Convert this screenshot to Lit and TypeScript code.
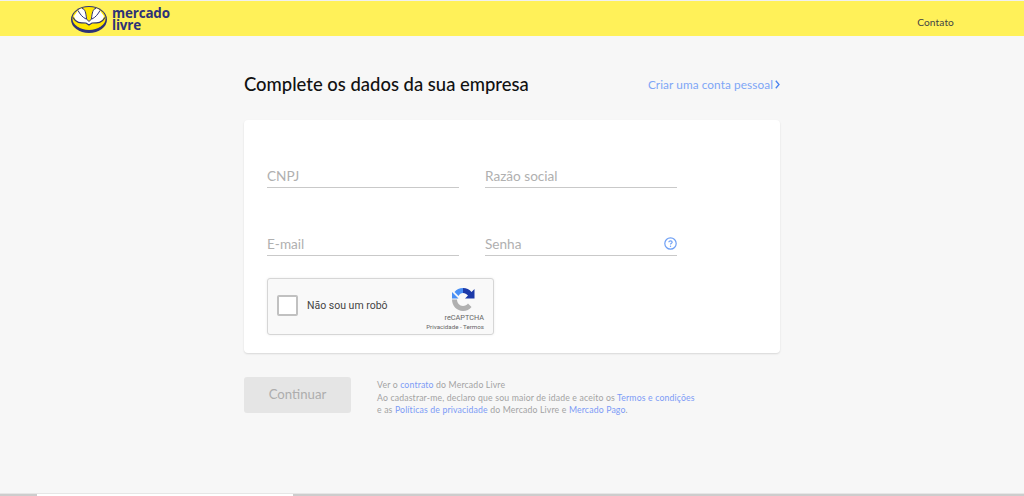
import { LitElement, html, css } from "lit";
import { customElement } from "lit/decorators.js";

@customElement("app-root")
export class AppRoot extends LitElement {
  static styles = css`
    :host { display: block; width: 1024px; height: 496px; overflow: hidden; background: #f7f7f7; font-family: Lato, "Open Sans", sans-serif; color: #333; position: relative; }
    * { box-sizing: border-box; }
    .page { height: 496px; display: flex; flex-direction: column; }
    .topline { height: 1px; background: #f0f0f0; flex: none; }
    header { height: 35px; background: #fff159; flex: none; display: flex; align-items: center; justify-content: space-between; padding: 0 70px 0 71px; }
    .logo { display: flex; align-items: center; gap: 5px; height: 35px; }
    .logo svg { display: block; margin-top: 1px; }
    .wordmark { color: #2d3277; font-family: "Open Sans", sans-serif; font-weight: 700; font-size: 13.4px; line-height: 12px; letter-spacing: -0.15px; }
    .contact { font-size: 10.2px; color: #444; padding-top: 6px; letter-spacing: 0.1px; }
    main { flex: 1; width: 536px; margin-left: 244px; display: flex; flex-direction: column; }
    .title-row { display: flex; justify-content: space-between; align-items: center; height: 28px; margin-top: 34px; }
    h1 { margin: 0; font-size: 18.45px; font-weight: 500; color: #111; font-family: Lato, sans-serif; }
    .personal { font-size: 11.8px; color: #7ea6f6; display: flex; align-items: center; gap: 2px; letter-spacing: 0.08px; }
    .card { margin-top: 22px; height: 233px; background: #fff; border-radius: 4px; box-shadow: 0 1px 2px rgba(0,0,0,.13); padding: 0 23px; }
    .fields { display: grid; grid-template-columns: 192px 192px; column-gap: 26px; row-gap: 36px; padding-top: 36px; }
    .field { height: 32px; border-bottom: 1px solid #c9c9c9; display: flex; align-items: center; justify-content: space-between; padding-top: 8px; font-size: 13.6px; color: #b0b0b0; }
    .captcha { margin-top: 22px; width: 227px; height: 57px; background: #f9f9f9; border: 1px solid #d6d6d6; border-radius: 3px; box-shadow: 0 0 3px rgba(0,0,0,.07); display: flex; align-items: center; padding: 0 9px 2px; font-family: Roboto, sans-serif; position: relative; }
    .check { width: 21px; height: 21px; background: #fff; border: 2px solid #c1c1c1; border-radius: 2px; flex: none; }
    .robot { margin-left: 9px; font-size: 10.5px; color: #444; flex: 1; }
    .badge { width: 70px; margin-right: -9px; padding-top: 7px; display: flex; flex-direction: column; align-items: flex-end; padding-right: 9px; color: #666; }
    .badge svg { display: block; margin: 0 9px 1px 0; }
    .rc { font-size: 7.3px; line-height: 9px; color: #666; }
    .terms { font-size: 6.2px; line-height: 9px; color: #666; margin-top: 1px; white-space: nowrap; }
    .bottom { display: flex; margin-top: 24px; }
    .btn { width: 107px; height: 36px; background: #e5e5e5; border-radius: 3px; color: #adadad; font-size: 13.2px; display: flex; align-items: center; justify-content: center; flex: none; padding-bottom: 2px; }
    .legal { margin-left: 26px; margin-top: 2px; font-size: 8.7px; line-height: 12.5px; color: #a3a3a3; letter-spacing: 0.16px; white-space: nowrap; }
    .legal a { color: #7c9bf6; text-decoration: none; }
    .scrollbar { position: absolute; left: 0; right: 0; bottom: 0; height: 3px; background: #cdcdcd; border-top: 1px solid #e6e6e6; }
    .thumb { position: absolute; left: 37px; top: 0; width: 256px; height: 2px; background: #fff; }
  `;

  render() {
    return html`
      <div class="page">
        <div class="topline"></div>
        <header>
          <div class="logo">
            <svg width="36" height="27" viewBox="0 0 36 27">
              <ellipse cx="18" cy="13.500" rx="18" ry="13.500" fill="#2d3277"/>
              <ellipse cx="18" cy="12.500" rx="16.600" ry="11.400" fill="#ffe600"/>
              <path d="M3 10 C6 6 8 2.500 11 2.500 C14 2.500 15 7 15.500 13 L18 15.500 L20.500 13 C21 7 22 2.500 25 2.500 C28 2.500 30 6 33 10 C32 14 30 16 27 16.500 L21 17 L18 19 L15 17 L9 16.500 C6 16 4 14 3 10 Z" fill="#fff"/>
              <path d="M11 2.500 C14 2.500 15 7 15.500 13 L18 15.500 L20.500 13 C21 7 22 2.500 25 2.500 M7 4.500 C9 8 11 11 15 13 M29 4.500 C27 8 25 11 21 13" fill="none" stroke="#2d3277" stroke-width="1"/>
              <path d="M2 11.500 C5 17 9 17 15 17 L18 19 L21 17 C27 17 31 17 34 11.500" fill="none" stroke="#2d3277" stroke-width="1.200"/>
            </svg>
            <div class="wordmark">mercado<br/>livre</div>
          </div>
          <div class="contact">Contato</div>
        </header>
        <main>
          <div class="title-row">
            <h1>Complete os dados da sua empresa</h1>
            <div class="personal">Criar uma conta pessoal
              <svg width="5" height="9" viewBox="0 0 5 9"><path d="M0.800 0.800 L4 4.500 L0.800 8.200" fill="none" stroke="#4a83f0" stroke-width="1.300"/></svg>
            </div>
          </div>
          <section class="card">
            <div class="fields">
              <div class="field">CNPJ</div>
              <div class="field">Razão social</div>
              <div class="field">E-mail</div>
              <div class="field">Senha
                <svg width="13" height="13" viewBox="0 0 13 13">
                  <circle cx="6.500" cy="6.500" r="5.700" fill="none" stroke="#6fa0f5" stroke-width="1.200"/>
                  <path d="M4.800 5.200 C4.800 3.400 8.200 3.400 8.200 5.200 C8.200 6.300 6.500 6.200 6.500 7.600" fill="none" stroke="#6fa0f5" stroke-width="1.100"/>
                  <circle cx="6.500" cy="9.300" r="0.700" fill="#6fa0f5"/>
                </svg>
              </div>
            </div>
            <div class="captcha">
              <div class="check"></div>
              <div class="robot">Não sou um robô</div>
              <div class="badge">
                <svg width="24" height="25" viewBox="0 0 24 25">
                  <path d="M12 1 C8.500 1 5.500 2.500 3.500 5 L7.500 9 C8.500 7 10 6 12 6 Z" fill="#4a90f5"/>
                  <path d="M12 1 C15.500 1 18.500 2.500 20.500 5 L23.500 2 V11.500 H14 L17 8.500 C15.500 7 14 6 12 6 Z" fill="#1c3aa9"/>
                  <path d="M1 5 V11.500 H7.500 Z" fill="#4a90f5"/>
                  <path d="M1 12.500 H6 C6 16 8.500 19 12 19 C14 19 16 18 17 16.500 L20.500 20 C18.500 22.500 15.500 24 12 24 C6 24 1 19 1 12.500 Z" fill="#b0b0b0"/>
                </svg>
                <div class="rc">reCAPTCHA</div>
                <div class="terms">Privacidade - Termos</div>
              </div>
            </div>
          </section>
          <div class="bottom">
            <div class="btn">Continuar</div>
            <div class="legal">
              Ver o <a>contrato</a> do Mercado Livre<br/>
              Ao cadastrar-me, declaro que sou maior de idade e aceito os <a>Termos e condições</a><br/>
              e as <a>Políticas de privacidade</a> do Mercado Livre e <a>Mercado Pago</a>.
            </div>
          </div>
        </main>
        <div class="scrollbar"><div class="thumb"></div></div>
      </div>
    `;
  }
}
